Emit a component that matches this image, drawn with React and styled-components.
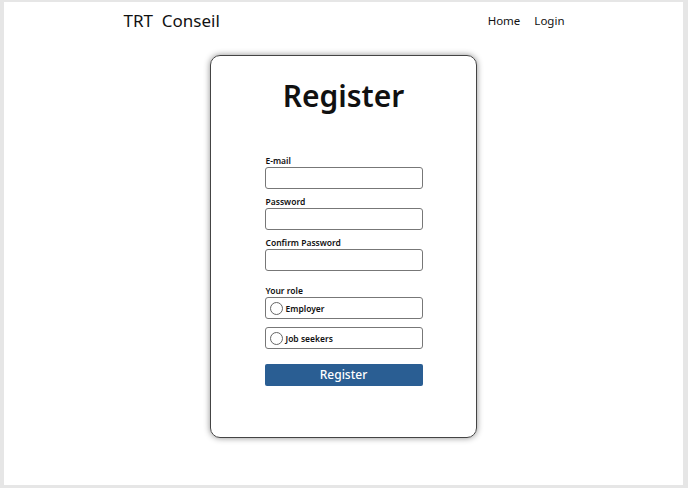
import React from "react";
import styled, { createGlobalStyle } from "styled-components";

const GlobalStyle = createGlobalStyle`
  body {
    margin: 0;
    background-color: #e6e6e6;
    font-family: "Noto Sans", "Open Sans", sans-serif;
  }
`;

const Page = styled.div`
  margin: 2px 5px 3px 4px;
  height: 483px;
  background-color: #fff;
  display: flex;
  flex-direction: column;
  align-items: center;
`;

const Header = styled.header`
  width: 440px;
  height: 36px;
  display: flex;
  align-items: center;
  justify-content: space-between;
`;

const Brand = styled.span`
  font-size: 17px;
  color: #111;
  white-space: pre;
`;

const Nav = styled.nav`
  display: flex;
  gap: 14px;
  margin-right: -1px;
`;

const NavLink = styled.a`
  font-size: 11.5px;
  color: #111;
  text-decoration: none;
`;

const Card = styled.div`
  margin-top: 17px;
  width: 265px;
  height: 381px;
  border: 1px solid #444;
  border-radius: 10px;
  box-shadow: 0 0 6px rgba(0, 0, 0, 0.45);
  display: flex;
  flex-direction: column;
  align-items: center;
`;

const Title = styled.h1`
  margin: 18px 0 0;
  font-size: 30px;
  font-weight: 600;
  line-height: 44px;
  color: #111;
`;

const Form = styled.form`
  margin-top: 37px;
  width: 158px;
  display: flex;
  flex-direction: column;
`;

const Label = styled.label`
  font-size: 8.5px;
  font-weight: 600;
  color: #111;
  line-height: 12px;
  margin-top: ${(props) => props.gap || 0}px;
  padding-left: 1px;
`;

const Input = styled.input`
  box-sizing: border-box;
  width: 158px;
  height: 22px;
  margin: 0;
  border: 1px solid #777;
  border-radius: 3px;
  padding: 0 6px;
`;

const Option = styled.label`
  box-sizing: border-box;
  height: 22px;
  margin-top: ${(props) => props.gap || 0}px;
  border: 1px solid #777;
  border-radius: 3px;
  display: flex;
  align-items: center;
  gap: 3px;
  padding-left: 4px;
  font-size: 8.5px;
  font-weight: 600;
  color: #111;
`;

const Radio = styled.span`
  box-sizing: border-box;
  width: 13px;
  height: 13px;
  border: 1px solid #666;
  border-radius: 50%;
`;

const Submit = styled.button`
  margin-top: 15px;
  height: 22px;
  padding: 0 0 1px;
  border: none;
  border-radius: 2px;
  background-color: #2a5e93;
  color: #fff;
  font-family: "Noto Sans", "Open Sans", sans-serif;
  font-size: 12px;
  font-weight: 500;
`;

const App = () => {
  return (
    <>
      <GlobalStyle />
      <Page>
        <Header>
          <Brand>TRT  Conseil</Brand>
          <Nav>
            <NavLink>Home</NavLink>
            <NavLink>Login</NavLink>
          </Nav>
        </Header>
        <Card>
          <Title>Register</Title>
          <Form>
            <Label>E-mail</Label>
            <Input type="email" />
            <Label gap={7}>Password</Label>
            <Input type="password" />
            <Label gap={7}>Confirm Password</Label>
            <Input type="password" />
            <Label gap={14}>Your role</Label>
            <Option>
              <Radio />
              Employer
            </Option>
            <Option gap={8}>
              <Radio />
              Job seekers
            </Option>
            <Submit type="button">Register</Submit>
          </Form>
        </Card>
      </Page>
    </>
  );
};

export default App;
